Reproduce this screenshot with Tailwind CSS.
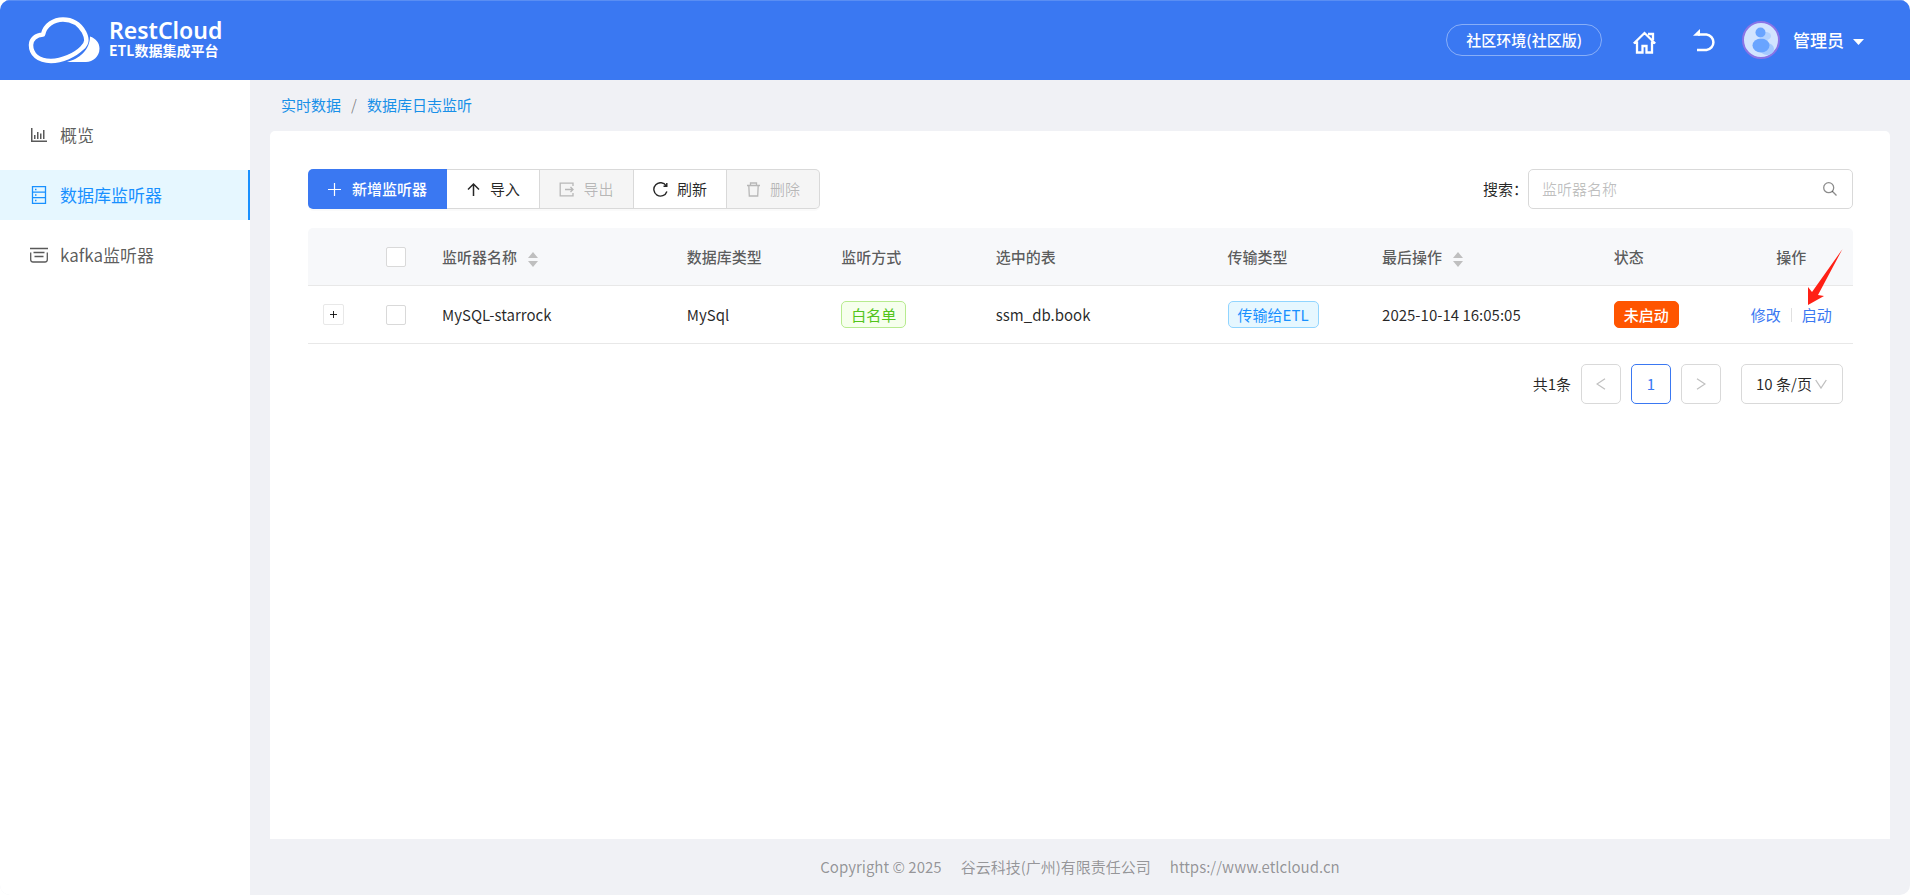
<!DOCTYPE html>
<html lang="zh-CN">
<head>
    <meta charset="UTF-8">
    <meta name="viewport" content="width=device-width, initial-scale=1.0">
    <title>数据库监听器 - RestCloud ETL数据集成平台</title>
    <script src="https://cdn.jsdelivr.net/npm/@tailwindcss/browser@4"></script>
</head>
<body class="bg-white font-['Noto_Sans_CJK_SC',sans-serif] text-[15px] leading-6 text-black/85">
<div class="min-h-screen flex flex-col bg-[#f0f1f5] rounded-[10px] overflow-hidden">

    <!-- 顶部导航 -->
    <header class="h-20 shrink-0 bg-[#3a78f2] shadow-[inset_0_1px_0_#5a8ef3] text-white flex items-center justify-between pl-7 pr-[46px]">
        <a href="#" class="flex items-center gap-[9px]">
            <svg class="w-[72px] h-[47px]" viewBox="0 0 72 47" fill="none">
                <path d="M3 28C3 22 8 18 15 17.500C17 8 26 2.500 35 2.500C45 2.500 52 8 56 15C59 21 60 26 54 31C47 38 34 44 23 44C10 44 3 37 3 28Z" stroke="#fff" stroke-width="4.500" stroke-linejoin="round"/>
                <path d="M62 19.500C68 21.500 71.500 26 71.500 31.500C71.500 39.500 65 45 58 45H39C51 42 62 33 62 19.500Z" fill="#fff"/>
            </svg>
            <span class="flex flex-col pb-1 font-bold">
                <span class="font-['Noto_Sans',sans-serif] text-[23px] leading-6 font-semibold">RestCloud</span>
                <span class="text-[14px] leading-4">ETL数据集成平台</span>
            </span>
        </a>
        <div class="flex items-center">
            <button class="h-8 px-[19px] rounded-full border border-white/40 font-medium">社区环境(社区版)</button>
            <a href="#" aria-label="首页" class="ml-[31px] mt-1">
                <svg class="w-[23px] h-[23px]" viewBox="0 0 23 23" fill="none" stroke="#fff" stroke-width="2.300">
                    <path d="M.8 12.500L11.500 2L22.200 12.500M4 10.500V21.500H9.500V15H13.500V21.500H19V10.500M15 3H20V9"/>
                </svg>
            </a>
            <a href="#" aria-label="返回" class="ml-[37px]">
                <svg class="w-[23px] h-[23px]" viewBox="0 0 23 23" fill="none">
                    <path d="M5 5.500H13.500A7.800 7.800 0 0 1 13.500 21H4" stroke="#fff" stroke-width="2.500"/>
                    <path d="M0 6.700L7 0V6.700Z" fill="#fff"/>
                </svg>
            </a>
            <svg class="ml-[26px] w-[38px] h-[38px]" viewBox="0 0 38 38">
                <circle cx="19" cy="19" r="18" fill="#d2e4ff" stroke="#8a74e6" stroke-width="2"/>
                <ellipse cx="24" cy="15" rx="5" ry="4" fill="#b3d2ff"/>
                <ellipse cx="25" cy="28" rx="7" ry="6" fill="#a5caff"/>
                <circle cx="18.500" cy="11.500" r="5" fill="#69a4ff"/>
                <ellipse cx="19" cy="24.500" rx="8.500" ry="7" fill="#69a4ff"/>
            </svg>
            <button class="ml-[13px] flex items-center gap-[9px] text-[17px] font-medium">
                管理员
                <svg class="mt-1 w-[11px] h-1.5" viewBox="0 0 11 6" fill="#fff"><path d="M0 0H11L5.500 6Z"/></svg>
            </button>
        </div>
    </header>

    <div class="flex flex-1">
        <!-- 侧边菜单 -->
        <aside class="w-[250px] shrink-0 bg-white pt-[30px]">
            <nav class="flex flex-col gap-2.5 text-[17px] text-black/65">
                <a href="#" class="h-[50px] pl-[30px] flex items-center gap-3">
                    <svg class="w-[18px] h-[18px]" viewBox="0 0 18 18" fill="currentColor">
                        <path d="M1 2H2.500V14.500H17V16H1ZM4 9H5.500V13H4ZM7 6H8.500V13H7ZM10 7.500H11.500V13H10ZM13 4H14.500V13H13Z"/>
                    </svg>
                    概览
                </a>
                <a href="#" class="h-[50px] pl-[30px] flex items-center gap-3 bg-[#e6f7ff] text-[#1890ff] border-r-2 border-[#1890ff]">
                    <svg class="w-[18px] h-[18px]" viewBox="0 0 18 18" fill="none" stroke="currentColor" stroke-width="1.300">
                        <path d="M2.500 .7H15.500V17.300H2.500ZM2.500 6.200H15.500M2.500 11.700H15.500M5 3.500H6.500M5 9H6.500M5 14.500H6.500"/>
                    </svg>
                    数据库监听器
                </a>
                <a href="#" class="h-[50px] pl-[30px] flex items-center gap-3">
                    <svg class="w-[18px] h-[18px]" viewBox="0 0 18 18" fill="none" stroke="currentColor" stroke-width="1.300">
                        <path d="M0 2.500H18M3.500 6.500H14.500M4.500 10.500H13.500M.7 6.500V13.500Q.7 16 3 16H15Q17.300 16 17.300 13.500V6.500"/>
                    </svg>
                    kafka监听器
                </a>
            </nav>
        </aside>

        <main class="flex-1 min-w-0 flex flex-col px-5">
            <nav aria-label="面包屑" class="h-[51px] pl-[11px] pb-0.5 flex items-center gap-2.5 text-[#1890e8]">
                <a href="#">实时数据</a>
                <span class="text-black/45">/</span>
                <a href="#">数据库日志监听</a>
            </nav>

            <section class="flex-1 bg-white rounded-t-[5px] p-[38px] pr-[37px]">
                <!-- 工具栏 -->
                <div class="flex justify-between items-center">
                    <div class="flex h-10 rounded-[5px] shadow-[0_2px_0_rgba(0,0,0,0.02)]">
                        <button class="w-[139px] flex items-center justify-center gap-[11px] bg-[#3a78f2] text-white font-medium rounded-l-[5px]">
                            <svg class="w-[13px] h-[13px]" viewBox="0 0 13 13" stroke="currentColor" stroke-width="1.200"><path d="M6.500 0V13M0 6.500H13"/></svg>
                            新增监听器
                        </button>
                        <button class="w-[93px] flex items-center justify-center gap-[9px] border border-l-0 border-[#d9d9d9]">
                            <svg class="w-[15px] h-[15px]" viewBox="0 0 15 15" fill="none" stroke="currentColor" stroke-width="1.500"><path d="M7.500 14V2M2 7.500L7.500 2L13 7.500"/></svg>
                            导入
                        </button>
                        <button disabled class="w-[94px] flex items-center justify-center gap-[9px] border border-l-0 border-[#d9d9d9] bg-[#f5f5f5] text-black/25">
                            <svg class="w-[15px] h-[15px]" viewBox="0 0 15 15" fill="none" stroke="currentColor" stroke-width="1.300"><path d="M14 4V1.200H1.200V13.800H14V11M6 7.500H14M11.500 5L14 7.500L11.500 10"/></svg>
                            导出
                        </button>
                        <button class="w-[93px] flex items-center justify-center gap-[9px] border border-l-0 border-[#d9d9d9]">
                            <svg class="w-[15px] h-[15px]" viewBox="0 0 15 15" fill="none" stroke="currentColor" stroke-width="1.400"><path d="M13.200 3.800A6.700 6.700 0 1 0 13.900 9.500M13.800 1V4.300H10.500"/></svg>
                            刷新
                        </button>
                        <button disabled class="w-[93px] flex items-center justify-center gap-[9px] border border-l-0 border-[#d9d9d9] rounded-r-[5px] bg-[#f5f5f5] text-black/25">
                            <svg class="w-[15px] h-[15px]" viewBox="0 0 15 15" fill="none" stroke="currentColor" stroke-width="1.300"><path d="M1 3.500H14M4.500 3.500V1H10.500V3.500M2.800 3.500L3.300 14H11.700L12.200 3.500"/></svg>
                            删除
                        </button>
                    </div>
                    <div class="flex items-center">
                        <label for="keyword">搜索：</label>
                        <div class="w-[325px] h-10 flex items-center border border-[#d9d9d9] rounded-[5px] pl-[13px] pr-[15px]">
                            <input id="keyword" type="text" placeholder="监听器名称" class="flex-1 min-w-0 outline-none placeholder:text-black/25">
                            <svg class="w-3.5 h-3.5 text-black/45" viewBox="0 0 14 14" fill="none" stroke="currentColor" stroke-width="1.300"><circle cx="5.700" cy="5.700" r="5"/><path d="M9.300 9.300L13.500 13.500"/></svg>
                        </div>
                    </div>
                </div>

                <!-- 监听器列表 -->
                <table class="mt-[19px] w-full table-fixed border-separate border-spacing-0 text-left">
                    <colgroup>
                        <col class="w-[50px]">
                        <col class="w-[76px]">
                        <col>
                        <col class="w-[10%]">
                        <col class="w-[10%]">
                        <col class="w-[15%]">
                        <col class="w-[10%]">
                        <col class="w-[15%]">
                        <col class="w-[8%]">
                        <col class="w-[8%]">
                    </colgroup>
                    <thead>
                        <tr class="h-[58px] text-black/65 [&>th]:px-2 [&>th]:font-medium [&>th]:bg-[#f7f8fa] [&>th]:border-b [&>th]:border-[#e8e8e8]">
                            <th class="rounded-tl-[5px]"></th>
                            <th><input type="checkbox" aria-label="全选" class="block ml-5 w-5 h-5 appearance-none bg-white border border-[#d9d9d9] rounded-[2px]"></th>
                            <th>
                                <span class="flex items-center gap-[11px]">监听器名称
                                    <svg class="w-2.5 h-[15px] mt-1.5" viewBox="0 0 10 15" fill="#bfbfbf"><path d="M5 0L10 6H0ZM5 15L10 9H0Z"/></svg>
                                </span>
                            </th>
                            <th>数据库类型</th>
                            <th>监听方式</th>
                            <th>选中的表</th>
                            <th>传输类型</th>
                            <th>
                                <span class="flex items-center gap-[11px]">最后操作
                                    <svg class="w-2.5 h-[15px] mt-1.5" viewBox="0 0 10 15" fill="#bfbfbf"><path d="M5 0L10 6H0ZM5 15L10 9H0Z"/></svg>
                                </span>
                            </th>
                            <th>状态</th>
                            <th class="rounded-tr-[5px] text-center">操作</th>
                        </tr>
                    </thead>
                    <tbody>
                        <tr class="h-[58px] [&>td]:px-2 [&>td]:border-b [&>td]:border-[#e8e8e8]">
                            <td>
                                <button aria-label="展开" class="mx-auto w-[21px] h-[21px] flex items-center justify-center border border-[#e8e8e8] rounded-[2px]">
                                    <svg class="w-[7px] h-[7px]" viewBox="0 0 7 7" stroke="currentColor" stroke-width="1"><path d="M3.500 0V7M0 3.500H7"/></svg>
                                </button>
                            </td>
                            <td><input type="checkbox" aria-label="选择 MySQL-starrock" class="block ml-5 w-5 h-5 appearance-none bg-white border border-[#d9d9d9] rounded-[2px]"></td>
                            <td>MySQL-starrock</td>
                            <td>MySql</td>
                            <td><span class="inline-block align-middle px-[9px] border border-[#b7eb8f] bg-[#f6ffed] text-[#52c41a] rounded-[5px] leading-[25px]">白名单</span></td>
                            <td>ssm_db.book</td>
                            <td><span class="inline-block align-middle px-[9px] border border-[#91d5ff] bg-[#e6f7ff] text-[#1890ff] rounded-[5px] leading-[25px]">传输给ETL</span></td>
                            <td>2025-10-14 16:05:05</td>
                            <td><span class="inline-block align-middle px-[9px] border border-[#f50] bg-[#f50] text-white font-medium rounded-[5px] leading-[25px]">未启动</span></td>
                            <td class="relative">
                                <div class="flex items-center justify-center gap-2.5 text-[#3a78f2]">
                                    <a href="#">修改</a>
                                    <span class="w-px h-3.5 bg-[#e0e0e0]"></span>
                                    <a href="#">启动</a>
                                </div>
                                <!-- 指向启动的红色箭头 -->
                                <svg class="absolute right-2.5 bottom-[38px] w-[35px] h-14 pointer-events-none" viewBox="0 0 35 56" fill="#ff2015"><path d="M0 56V38L4 43L34.500 0L10 46L16 47Z"/></svg>
                            </td>
                        </tr>
                    </tbody>
                </table>

                <!-- 分页 -->
                <div class="mt-5 pr-2.5 flex justify-end items-center gap-2.5">
                    <span>共1条</span>
                    <button disabled aria-label="上一页" class="w-10 h-10 flex items-center justify-center border border-[#d9d9d9] rounded-[5px] text-black/25">
                        <svg class="w-2.5 h-3" viewBox="0 0 10 12" fill="none" stroke="currentColor" stroke-width="1.300"><path d="M9 .7L1 6L9 11.300"/></svg>
                    </button>
                    <button class="w-10 h-10 border border-[#3a78f2] rounded-[5px] text-[#3a78f2]">1</button>
                    <button disabled aria-label="下一页" class="w-10 h-10 flex items-center justify-center border border-[#d9d9d9] rounded-[5px] text-black/25">
                        <svg class="w-2.5 h-3" viewBox="0 0 10 12" fill="none" stroke="currentColor" stroke-width="1.300"><path d="M1 .7L9 6L1 11.300"/></svg>
                    </button>
                    <div class="relative ml-2.5">
                        <select aria-label="每页条数" class="w-[102px] h-10 pl-3.5 appearance-none border border-[#d9d9d9] rounded-[5px]">
                            <option>10 条/页</option>
                        </select>
                        <svg class="absolute right-4 top-[15px] w-3 h-2.5 text-black/25 pointer-events-none" viewBox="0 0 12 10" fill="none" stroke="currentColor" stroke-width="1.300"><path d="M.7 1L6 9L11.300 1"/></svg>
                    </div>
                </div>
            </section>

            <footer class="h-14 flex items-center justify-center gap-[19px] text-black/40">
                <span>Copyright © 2025</span>
                <span>谷云科技(广州)有限责任公司</span>
                <span>https://www.etlcloud.cn</span>
            </footer>
        </main>
    </div>
</div>
</body>
</html>
